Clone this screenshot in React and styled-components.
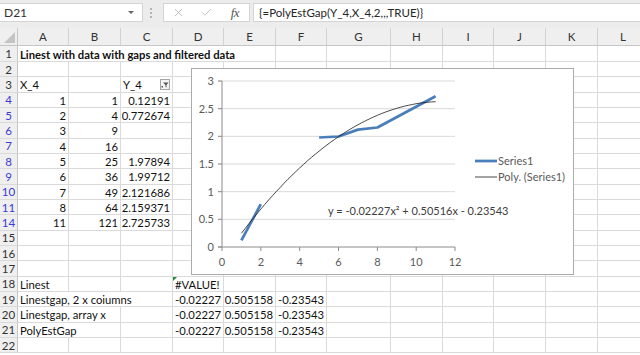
import React from "react";
import styled, { createGlobalStyle } from "styled-components";
import { X as XIcon, Check } from "lucide-react";

const GlobalStyle = createGlobalStyle`
  html, body {
    margin: 0;
    padding: 0;
    background: #fff;
    overflow: hidden;
  }
  body {
    font-family: Lato, "Liberation Sans", sans-serif;
  }
`;

const COLS = [
  { key: "A", w: 51 },
  { key: "B", w: 52 },
  { key: "C", w: 52 },
  { key: "D", w: 51 },
  { key: "E", w: 52 },
  { key: "F", w: 51 },
  { key: "G", w: 64 },
  { key: "H", w: 52 },
  { key: "I", w: 51 },
  { key: "J", w: 52 },
  { key: "K", w: 52 },
  { key: "L", w: 51 },
];

const ROWS = [
  { n: 1, cells: { A: { t: "Linest with data with gaps and filtered data", bold: true, span: 5 } } },
  { n: 2 },
  { n: 3, cells: { A: { t: "X_4" }, C: { t: "Y_4", filter: true } } },
  { n: 4, blue: true, cells: { A: { t: "1", num: true }, B: { t: "1", num: true }, C: { t: "0.12191", num: true } } },
  { n: 5, blue: true, cells: { A: { t: "2", num: true }, B: { t: "4", num: true }, C: { t: "0.772674", num: true } } },
  { n: 6, blue: true, cells: { A: { t: "3", num: true }, B: { t: "9", num: true } } },
  { n: 7, blue: true, cells: { A: { t: "4", num: true }, B: { t: "16", num: true } } },
  { n: 8, blue: true, cells: { A: { t: "5", num: true }, B: { t: "25", num: true }, C: { t: "1.97894", num: true } } },
  { n: 9, blue: true, cells: { A: { t: "6", num: true }, B: { t: "36", num: true }, C: { t: "1.99712", num: true } } },
  { n: 10, blue: true, cells: { A: { t: "7", num: true }, B: { t: "49", num: true }, C: { t: "2.121686", num: true } } },
  { n: 11, blue: true, cells: { A: { t: "8", num: true }, B: { t: "64", num: true }, C: { t: "2.159371", num: true } } },
  { n: 14, blue: true, cells: { A: { t: "11", num: true }, B: { t: "121", num: true }, C: { t: "2.725733", num: true } } },
  { n: 15 },
  { n: 16 },
  { n: 17 },
  { n: 18, cells: { A: { t: "Linest" }, D: { t: "#VALUE!", error: true } } },
  {
    n: 19,
    cells: {
      A: { t: "Linestgap, 2 x coiumns", span: 3 },
      D: { t: "-0.02227", num: true },
      E: { t: "0.505158", num: true },
      F: { t: "-0.23543", num: true },
    },
  },
  {
    n: 20,
    cells: {
      A: { t: "Linestgap, array x", span: 2 },
      D: { t: "-0.02227", num: true },
      E: { t: "0.505158", num: true },
      F: { t: "-0.23543", num: true },
    },
  },
  {
    n: 21,
    cells: {
      A: { t: "PolyEstGap", span: 2 },
      D: { t: "-0.02227", num: true },
      E: { t: "0.505158", num: true },
      F: { t: "-0.23543", num: true },
    },
  },
  { n: 22 },
];

/* ---------- formula bar ---------- */

const FormulaBar = styled.div`
  display: flex;
  align-items: flex-start;
  height: 28px;
  padding-top: 3px;
  box-sizing: border-box;
  background: #ececec;
`;

const NameBox = styled.div`
  width: 143px;
  height: 19px;
  box-sizing: border-box;
  background: #fff;
  border: 1px solid #d4d4d4;
  border-left: none;
  display: flex;
  align-items: center;
  justify-content: space-between;
  padding: 0 8px 0 4px;
  font-size: 12px;
  color: #333;
`;

const DropArrow = styled.span`
  width: 0;
  height: 0;
  border-left: 3px solid transparent;
  border-right: 3px solid transparent;
  border-top: 3px solid #666;
`;

const Grip = styled.div`
  width: 16px;
  margin-right: 4px;
  height: 19px;
  display: flex;
  flex-direction: column;
  align-items: center;
  justify-content: center;
  gap: 2px;
`;

const GripDot = styled.span`
  width: 2px;
  height: 2px;
  background: #b4b4b4;
`;

const ButtonBox = styled.div`
  width: 87px;
  height: 19px;
  box-sizing: border-box;
  background: #fff;
  border: 1px solid #d4d4d4;
  display: flex;
`;

const BarButton = styled.span`
  flex: 1;
  display: flex;
  align-items: center;
  justify-content: center;
  color: #a8a8a8;
`;

const Fx = styled.span`
  font-family: "Liberation Serif", serif;
  font-style: italic;
  font-size: 13px;
  color: #555;
  letter-spacing: -0.5px;
`;

const FormulaInput = styled.div`
  flex: 1;
  height: 19px;
  margin-left: 3px;
  box-sizing: border-box;
  background: #fff;
  border: 1px solid #d4d4d4;
  border-right: none;
  display: flex;
  align-items: center;
  padding-left: 5px;
  font-size: 11.5px;
  color: #262626;
`;

/* ---------- sheet ---------- */

const Sheet = styled.div`
  position: relative;
  display: grid;
  grid-template-columns: 18px ${COLS.map((c) => c.w + "px").join(" ")};
  grid-template-rows: 18px 16px;
  grid-auto-rows: 15.33px;
  font-size: 11.25px;
`;

const Corner = styled.div`
  background: #efefef;
  border-right: 1px solid #c6c6c6;
  border-bottom: 1px solid #c6c6c6;
  display: flex;
  align-items: flex-end;
  justify-content: flex-end;
  padding: 0 2px 2px 0;
  box-sizing: border-box;
`;

const CornerTri = styled.span`
  width: 0;
  height: 0;
  border-left: 11px solid transparent;
  border-bottom: 11px solid #c4c4c4;
`;

const ColHead = styled.div`
  background: #efefef;
  border-right: 1px solid #d2d2d2;
  border-bottom: 1px solid #c6c6c6;
  box-sizing: border-box;
  display: flex;
  align-items: center;
  justify-content: center;
  color: #333;
  font-size: 11.5px;
`;

const RowHead = styled.div`
  background: #efefef;
  border-right: 1px solid #c6c6c6;
  border-bottom: 1px solid #dadada;
  box-sizing: border-box;
  display: flex;
  align-items: center;
  justify-content: center;
  color: ${(p) => (p.$blue ? "#3a3ad2" : "#333")};
  font-size: 11.5px;
`;

const Cell = styled.div`
  position: relative;
  grid-column: span ${(p) => p.$span || 1};
  border-right: 1px solid #dadada;
  border-bottom: 1px solid #dadada;
  box-sizing: border-box;
  display: flex;
  align-items: center;
  justify-content: ${(p) => (p.$num ? "flex-end" : "space-between")};
  padding: 1px 2px 0 2px;
  white-space: nowrap;
  font-weight: ${(p) => (p.$bold ? 700 : 400)};
  color: #111;
`;

const FilterButton = styled.span`
  width: 10px;
  height: 11px;
  box-sizing: border-box;
  border: 1px solid #a6a6a6;
  background: #f4f4f4;
  display: flex;
  align-items: center;
  justify-content: center;
`;

const ErrorMark = styled.span`
  position: absolute;
  left: 0;
  top: 0;
  width: 0;
  height: 0;
  border-top: 4px solid #1e8a3a;
  border-right: 4px solid transparent;
`;

/* ---------- chart ---------- */

const ChartBox = styled.div`
  position: absolute;
  left: 191px;
  top: 40px;
  width: 383px;
  height: 207px;
  box-sizing: border-box;
  background: #fff;
  border: 1px solid #ababab;
`;

const FunnelIcon = () => (
  <svg width="8" height="7" viewBox="0 0 8 7">
    <path d="M2 1.5 H7.5 L5.5 4 V6.5 L4.5 6 V4 Z" fill="#555" />
    <rect x="0.5" y="5" width="1.5" height="1.5" fill="#555" />
  </svg>
);

const px = (x) => 30 + x * 19.42;
const py = (y) => 178 - y * 55.33;
const line = (pts) => pts.map(([x, y]) => `${px(x).toFixed(1)},${py(y).toFixed(1)}`).join(" ");

const SERIES = [
  [
    [1, 0.12191],
    [2, 0.772674],
  ],
  [
    [5, 1.97894],
    [6, 1.99712],
    [7, 2.121686],
    [8, 2.159371],
    [11, 2.725733],
  ],
];

const trend = [];
for (let x = 1; x <= 11.001; x += 0.2) {
  trend.push([x, -0.02227 * x * x + 0.50516 * x - 0.23543]);
}

const axisText = { fontFamily: "Lato, 'Liberation Sans', sans-serif", fontSize: 11, fill: "#595959" };

const Chart = () => (
  <ChartBox>
    <svg width="381" height="205" viewBox="0 0 381 205">
      {[0.5, 1, 1.5, 2, 2.5, 3].map((v) => (
        <line key={v} x1={26} x2={263} y1={py(v)} y2={py(v)} stroke="#d9d9d9" strokeWidth="1" />
      ))}
      <line x1={30} x2={30} y1={py(3)} y2={py(0)} stroke="#8c8c8c" strokeWidth="1" />
      <line x1={26} x2={263} y1={py(0)} y2={py(0)} stroke="#8c8c8c" strokeWidth="1" />
      {[0, 0.5, 1, 1.5, 2, 2.5, 3].map((v) => (
        <line key={"t" + v} x1={26} x2={30} y1={py(v)} y2={py(v)} stroke="#8c8c8c" />
      ))}
      {[0, 2, 4, 6, 8, 10, 12].map((v) => (
        <line key={"xt" + v} x1={px(v)} x2={px(v)} y1={py(0)} y2={py(0) + 4} stroke="#8c8c8c" />
      ))}
      {[0, 0.5, 1, 1.5, 2, 2.5, 3].map((v) => (
        <text key={"yl" + v} x={22} y={py(v) + 4} textAnchor="end" style={axisText}>
          {v}
        </text>
      ))}
      {[0, 2, 4, 6, 8, 10, 12].map((v) => (
        <text key={"xl" + v} x={px(v)} y={197} textAnchor="middle" style={axisText}>
          {v}
        </text>
      ))}
      {SERIES.map((s, i) => (
        <polyline
          key={i}
          points={line(s)}
          fill="none"
          stroke="#4a7ebb"
          strokeWidth="2.75"
          strokeLinejoin="round"
        />
      ))}
      <polyline points={line(trend)} fill="none" stroke="#1a1a1a" strokeWidth="0.8" />
      <text x={136} y={146} style={{ ...axisText, fill: "#404040" }}>
        y = -0.02227x² + 0.50516x - 0.23543
      </text>
      <line x1={283} x2={305} y1={92} y2={92} stroke="#4a7ebb" strokeWidth="2.75" />
      <text x={306} y={96} style={axisText}>
        Series1
      </text>
      <line x1={283} x2={305} y1={108} y2={108} stroke="#1a1a1a" strokeWidth="0.8" />
      <text x={306} y={112} style={axisText}>
        Poly. (Series1)
      </text>
    </svg>
  </ChartBox>
);

const SheetRow = ({ row }) => {
  const out = [
    <RowHead key="h" $blue={row.blue}>
      {row.n}
    </RowHead>,
  ];
  const cells = row.cells || {};
  let skip = 0;
  COLS.forEach((c) => {
    if (skip > 0) {
      skip--;
      return;
    }
    const d = cells[c.key];
    if (!d) {
      out.push(<Cell key={c.key} />);
      return;
    }
    if (d.span) skip = d.span - 1;
    out.push(
      <Cell key={c.key} $span={d.span} $num={d.num} $bold={d.bold}>
        {d.error && <ErrorMark />}
        <span>{d.t}</span>
        {d.filter && (
          <FilterButton>
            <FunnelIcon />
          </FilterButton>
        )}
      </Cell>
    );
  });
  return out;
};

export default function App() {
  return (
    <>
      <GlobalStyle />
      <FormulaBar>
        <NameBox>
          <span>D21</span>
          <DropArrow />
        </NameBox>
        <Grip>
          <GripDot />
          <GripDot />
          <GripDot />
        </Grip>
        <ButtonBox>
          <BarButton>
            <XIcon size={13} strokeWidth={1.3} />
          </BarButton>
          <BarButton>
            <Check size={13} strokeWidth={1.3} />
          </BarButton>
          <BarButton>
            <Fx>fx</Fx>
          </BarButton>
        </ButtonBox>
        <FormulaInput>{"{=PolyEstGap(Y_4,X_4,2,,,TRUE)}"}</FormulaInput>
      </FormulaBar>
      <Sheet>
        <Corner>
          <CornerTri />
        </Corner>
        {COLS.map((c) => (
          <ColHead key={c.key}>{c.key}</ColHead>
        ))}
        {ROWS.map((r) => (
          <SheetRow key={r.n} row={r} />
        ))}
        <Chart />
      </Sheet>
    </>
  );
}
